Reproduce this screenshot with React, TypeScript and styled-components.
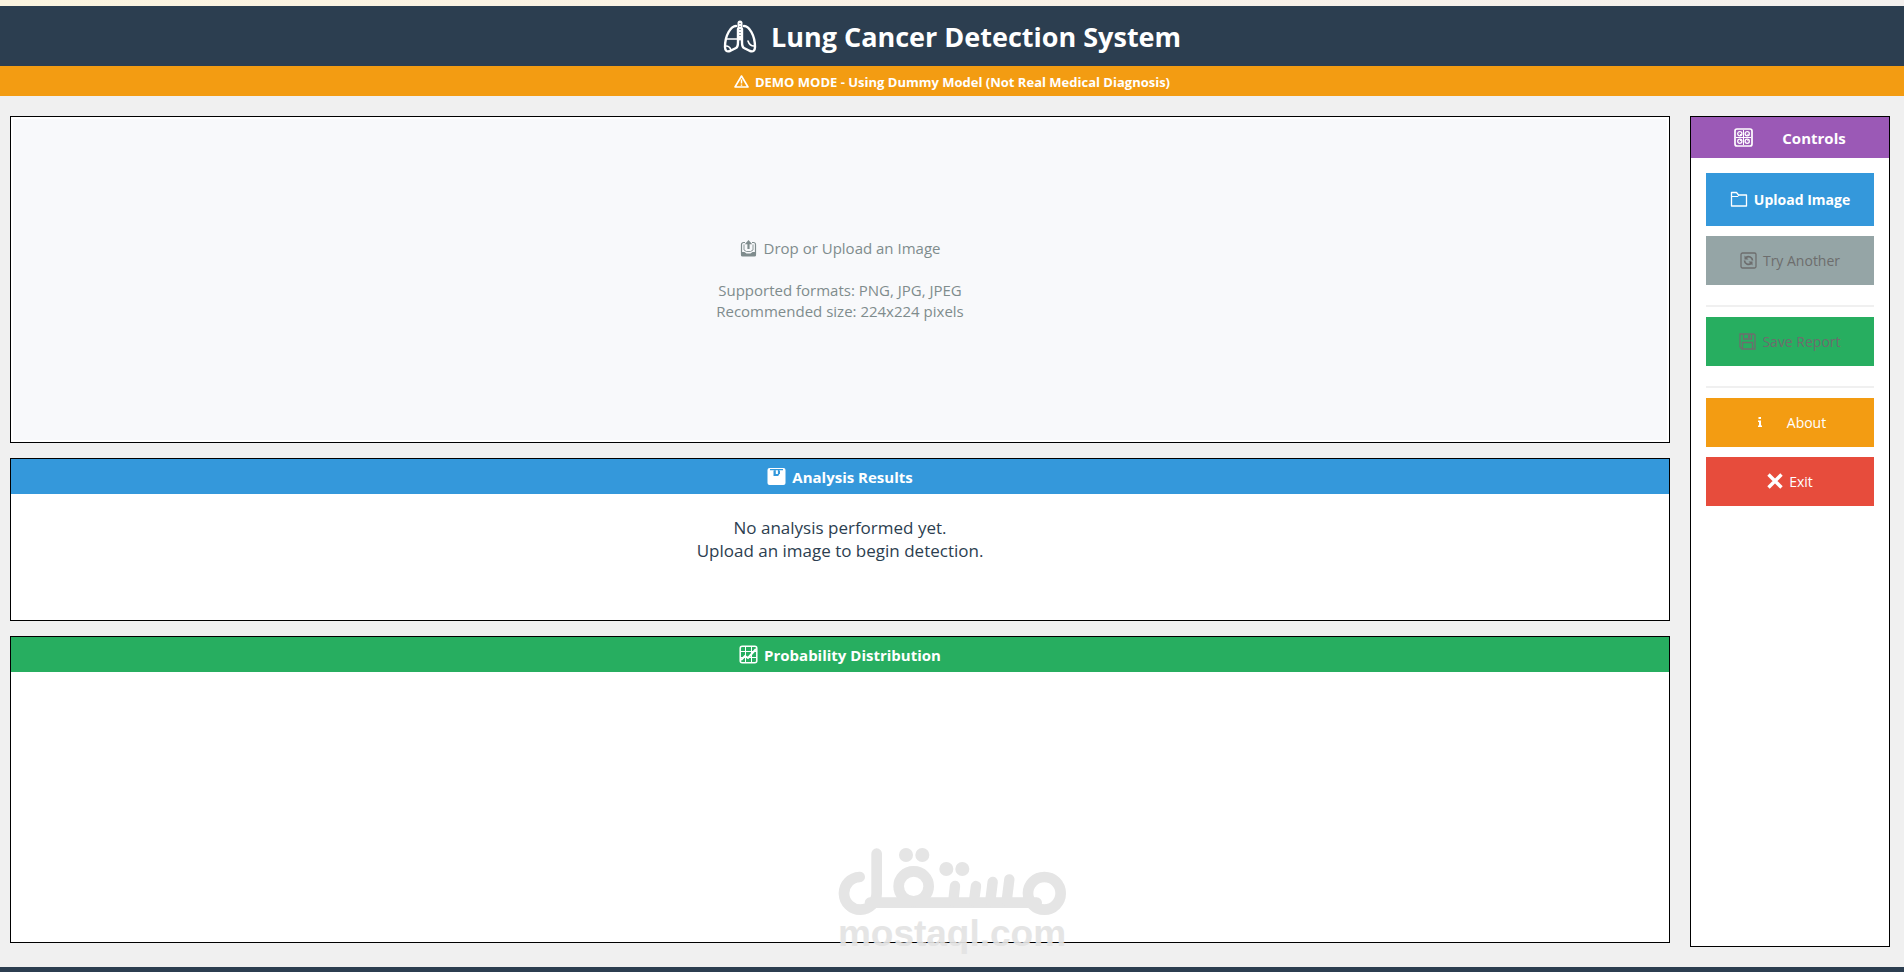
import React from "react";
import styled, { createGlobalStyle, css } from "styled-components";

const Global = createGlobalStyle`
  *, *::before, *::after { box-sizing: border-box; }
  body {
    margin: 0;
    background: #f0f0f0;
    font-family: "Open Sans", "Noto Sans", sans-serif;
  }
`;

const Page = styled.div`
  position: relative;
  display: flex;
  flex-direction: column;
  min-height: 100vh;
  overflow: hidden;
`;

const TopStrip = styled.div`
  height: 6px;
  background: linear-gradient(90deg, #fbf4e0, #f9f1e6 50%, #f3f0ee);
`;

const Header = styled.header`
  display: flex;
  align-items: center;
  justify-content: center;
  gap: 14px;
  height: 60px;
  padding-top: 2px;
  background: #2c3e50;
  color: #fff;
`;

const Title = styled.h1`
  margin: 0;
  font-size: 27px;
  line-height: 36px;
  font-weight: 700;
`;

const DemoBar = styled.div`
  display: flex;
  align-items: center;
  justify-content: center;
  gap: 6px;
  height: 30px;
  padding-top: 1px;
  background: #f39c12;
  color: #fff;
  font-size: 13px;
  font-weight: 700;
`;

const Main = styled.main`
  flex: 1;
  display: flex;
  gap: 20px;
  padding: 20px 14px 20px 10px;
`;

const Workspace = styled.div`
  flex: 1;
  display: flex;
  flex-direction: column;
  gap: 15px;
  padding-bottom: 4px;
`;

const Panel = styled.section<{ $basis?: number }>`
  display: flex;
  flex-direction: column;
  border: 1px solid #000;
  background: #fff;
  ${({ $basis }) => ($basis ? css`min-height: ${$basis}px;` : css`flex: 1;`)}
`;

const Sidebar = styled.aside`
  width: 200px;
  border: 1px solid #000;
  background: #fff;
`;

const PanelTitle = styled.h2<{ $color: string; $height?: number; $gap?: number }>`
  display: flex;
  align-items: center;
  justify-content: center;
  gap: ${({ $gap = 6 }) => $gap}px;
  height: ${({ $height = 35 }) => $height}px;
  margin: 0;
  background: ${({ $color }) => $color};
  color: #fff;
  font-size: 15px;
  font-weight: 700;
`;

const DropZone = styled.div`
  flex: 1;
  display: flex;
  flex-direction: column;
  align-items: center;
  justify-content: center;
  margin: 2px;
  background: #f8f9fb;
  color: #7f8c8d;
  font-size: 15px;
  line-height: 21px;
  text-align: center;
`;

const DropPrompt = styled.div`
  display: flex;
  align-items: center;
  gap: 7px;
  margin-bottom: 21px;
`;

const ResultText = styled.p`
  margin: 0;
  padding: 22px 20px;
  color: #2c3e50;
  font-size: 17px;
  line-height: 23px;
  text-align: center;
`;

const Actions = styled.div`
  display: flex;
  flex-direction: column;
  gap: 10px;
  padding: 15px;
`;

const Button = styled.button<{ $color: string; $primary?: boolean; $gap?: number }>`
  display: flex;
  align-items: center;
  justify-content: center;
  gap: ${({ $gap = 6 }) => $gap}px;
  height: ${({ $primary }) => ($primary ? 53 : 49)}px;
  padding: 0 0 1px;
  border: 0;
  background: ${({ $color }) => $color};
  color: #fff;
  font-family: inherit;
  font-size: 14px;
  font-weight: ${({ $primary }) => ($primary ? 700 : 400)};
  &:disabled { color: #6d6d6d; }
`;

const Separator = styled.hr`
  width: 100%;
  height: 2px;
  margin: 10px 0 0;
  border: 0;
  background: #f0f0f0;
`;

const Footer = styled.footer`
  height: 5px;
  background: #2c3e50;
`;

const Watermark = styled.div`
  position: absolute;
  left: 50%;
  bottom: 20px;
  display: flex;
  flex-direction: column;
  align-items: center;
  width: 228px;
  margin-left: -114px;
  color: #e3e3e3;
  opacity: 0.92;
  pointer-events: none;
  font: 700 37px/37px "Liberation Sans", sans-serif;
`;

const Icon = ({ size, children }: { size: number; children: React.ReactNode }) => (
  <svg width={size} height={size} viewBox={`0 0 ${size} ${size}`} fill="none" stroke="currentColor" strokeWidth="1.3" aria-hidden="true">
    {children}
  </svg>
);

const LungsIcon = () => (
  <Icon size={34}>
    <g strokeWidth="2.4" strokeLinejoin="round" strokeLinecap="round">
      <path d="M13 6C8 6 2 15 2 27c0 4 2 5 5 4l6-3c2-1 2-3 2-6V9" />
      <path d="M21 6c5 0 11 9 11 21 0 4-2 5-5 4l-6-3c-2-1-2-3-2-6V9" />
      <path d="M17 3v15" strokeWidth="5" />
      <path d="M3 19h11M3 26c3 0 4 1 5 4M31 26c-3 0-5-2-6-5" strokeWidth="1.7" />
    </g>
    <path d="M17 3v15" stroke="#2c3e50" strokeWidth="1" strokeDasharray="1 2" />
  </Icon>
);

const WarningIcon = () => (
  <Icon size={15}>
    <path d="M7.5 2 14 13H1z" strokeWidth="1.6" strokeLinejoin="round" />
    <path d="M7.5 5.5v4M7.5 10.500v1.300" strokeWidth="1.5" />
  </Icon>
);

const OutboxIcon = () => (
  <Icon size={17}>
    <path d="M5 2.500H3.500A2 2 0 0 0 1.500 4.500v10a1 1 0 0 0 1 1h12a1 1 0 0 0 1-1v-10a2 2 0 0 0-2-2H12" strokeWidth="1.2" />
    <path d="M1 12h3.500l2 1.500h4l2-1.500H16v3a1.500 1.500 0 0 1-1.500 1.500h-12A1.500 1.500 0 0 1 1 15z" fill="currentColor" stroke="none" />
    <path d="M8.500 9V3" strokeWidth="2.200" />
    <path d="M4.800 4.300 8.500 0l3.700 4.300z" fill="currentColor" stroke="none" />
    <path d="M4 4.500v5.500l2.500 1.500h4L13 10V4.500" strokeWidth=".9" />
  </Icon>
);

const BarChartIcon = () => (
  <Icon size={19}>
    <rect x="0.500" y="1" width="18" height="17" rx="2" fill="currentColor" stroke="none" />
    <path d="M3 2.700h13M8 3v5h3.500V3" stroke="#3498db" strokeWidth="1.200" />
    <path d="M6.500 3.500h2V8h-2zM11 3.500h2V7h-2zM6.500 7h4.500v2H6.500z" fill="#3498db" stroke="none" />
  </Icon>
);

const TrendIcon = () => (
  <Icon size={19}>
    <rect x="1.200" y="1.200" width="16.600" height="16.600" rx="2" strokeWidth="1.500" />
    <path d="M6.500 1v17M12.500 1v17M1 6.500h17M1 12.500h17" strokeWidth="1" />
    <path d="m2 15 4-4 3 2 8-9" strokeWidth="2" />
  </Icon>
);

const KnobsIcon = () => (
  <Icon size={19}>
    <rect x="1" y="1" width="17" height="17" rx="2" strokeWidth="1.700" />
    <g strokeWidth="1.300">
      <circle cx="5.800" cy="5.800" r="2.100" />
      <circle cx="13.200" cy="5.800" r="2.100" />
      <circle cx="5.800" cy="13.200" r="2.100" />
      <circle cx="13.200" cy="13.200" r="2.100" />
      <path d="M9.500 2v15M2 9.500h15M5.800 5.800l1.500 1.500M13.200 5.800l1.500 1.500M5.800 13.200l1.500-1.500M13.200 13.200l1.500-1.500" strokeWidth="1" />
    </g>
  </Icon>
);

const FolderIcon = () => (
  <Icon size={18}>
    <path d="M1.500 16V2.500h5l2 2.500h8v11z" strokeLinejoin="round" />
    <path d="M2 6.500h6l1-1.500" strokeWidth="1" />
  </Icon>
);

const RefreshIcon = () => (
  <Icon size={17}>
    <rect x="1" y="1" width="15" height="15" rx="1.500" />
    <path d="M12.500 8.500a4 4 0 0 0-6.500-3M4.500 8.500a4 4 0 0 0 6.500 3" strokeWidth="1.700" />
    <path d="M4.500 3.500v4h4zM12.500 13.500v-4h-4z" fill="currentColor" stroke="none" />
  </Icon>
);

const FloppyIcon = () => (
  <Icon size={17}>
    <path d="M1 1h14l1 1v14H3l-2-2z" />
    <path d="M4.500 1v5h8V1M3.500 16V9.500h10V16" />
    <path d="M10 2v3" strokeWidth="2" />
  </Icon>
);

const InfoIcon = () => (
  <Icon size={12}>
    <path d="M4.500 1h2.500v2H4.500zM4 4.500h3v5h1V11H4V9.500h1V6H4z" fill="currentColor" stroke="none" />
  </Icon>
);

const CrossIcon = () => (
  <Icon size={16}>
    <path d="m1.500 1.500 13 13M14.500 1.500l-13 13" strokeWidth="3.400" />
  </Icon>
);

const WatermarkLogo = () => (
  <svg width="228" height="67" viewBox="54 54 684 201" fill="none" stroke="currentColor" strokeWidth="32" strokeLinecap="round" aria-hidden="true">
    <path d="M119 141a49 49 0 1 0 51 49V71M150 218h500" />
    <circle cx="281" cy="169" r="45" />
    <circle cx="673" cy="190" r="49" />
    <path d="m405 168-5 45M468 168l-6 45M518 156l-7 57M568 148l-8 65" strokeWidth="31" />
    <g fill="currentColor" stroke="none">
      <circle cx="258" cy="75" r="21" />
      <circle cx="307" cy="75" r="21" />
      <circle cx="379" cy="117" r="21" />
      <circle cx="427" cy="117" r="21" />
    </g>
  </svg>
);

export default function App() {
  return (
    <>
      <Global />
      <Page>
        <TopStrip />
        <Header>
          <LungsIcon />
          <Title>Lung Cancer Detection System</Title>
        </Header>
        <DemoBar>
          <WarningIcon />
          <span>DEMO MODE - Using Dummy Model (Not Real Medical Diagnosis)</span>
        </DemoBar>
        <Main>
          <Workspace>
            <Panel $basis={327}>
              <DropZone>
                <DropPrompt><OutboxIcon /><span>Drop or Upload an Image</span></DropPrompt>
                <span>Supported formats: PNG, JPG, JPEG</span>
                <span>Recommended size: 224x224 pixels</span>
              </DropZone>
            </Panel>
            <Panel $basis={163}>
              <PanelTitle $color="#3498db"><BarChartIcon /><span>Analysis Results</span></PanelTitle>
              <ResultText>
                No analysis performed yet.<br />
                Upload an image to begin detection.
              </ResultText>
            </Panel>
            <Panel>
              <PanelTitle $color="#27ae60"><TrendIcon /><span>Probability Distribution</span></PanelTitle>
            </Panel>
          </Workspace>
          <Sidebar>
            <PanelTitle $color="#9b59b6" $height={41} $gap={29}><KnobsIcon /><span>Controls</span></PanelTitle>
            <Actions>
              <Button type="button" $color="#3498db" $primary><FolderIcon /><span>Upload Image</span></Button>
              <Button type="button" $color="#95a5a6" disabled><RefreshIcon /><span>Try Another</span></Button>
              <Separator />
              <Button type="button" $color="#27ae60" disabled><FloppyIcon /><span>Save Report</span></Button>
              <Separator />
              <Button type="button" $color="#f39c12" $gap={21}><InfoIcon /><span>About</span></Button>
              <Button type="button" $color="#e74c3c"><CrossIcon /><span>Exit</span></Button>
            </Actions>
          </Sidebar>
        </Main>
        <Footer />
        <Watermark>
          <WatermarkLogo />
          <span>mostaql.com</span>
        </Watermark>
      </Page>
    </>
  );
}
